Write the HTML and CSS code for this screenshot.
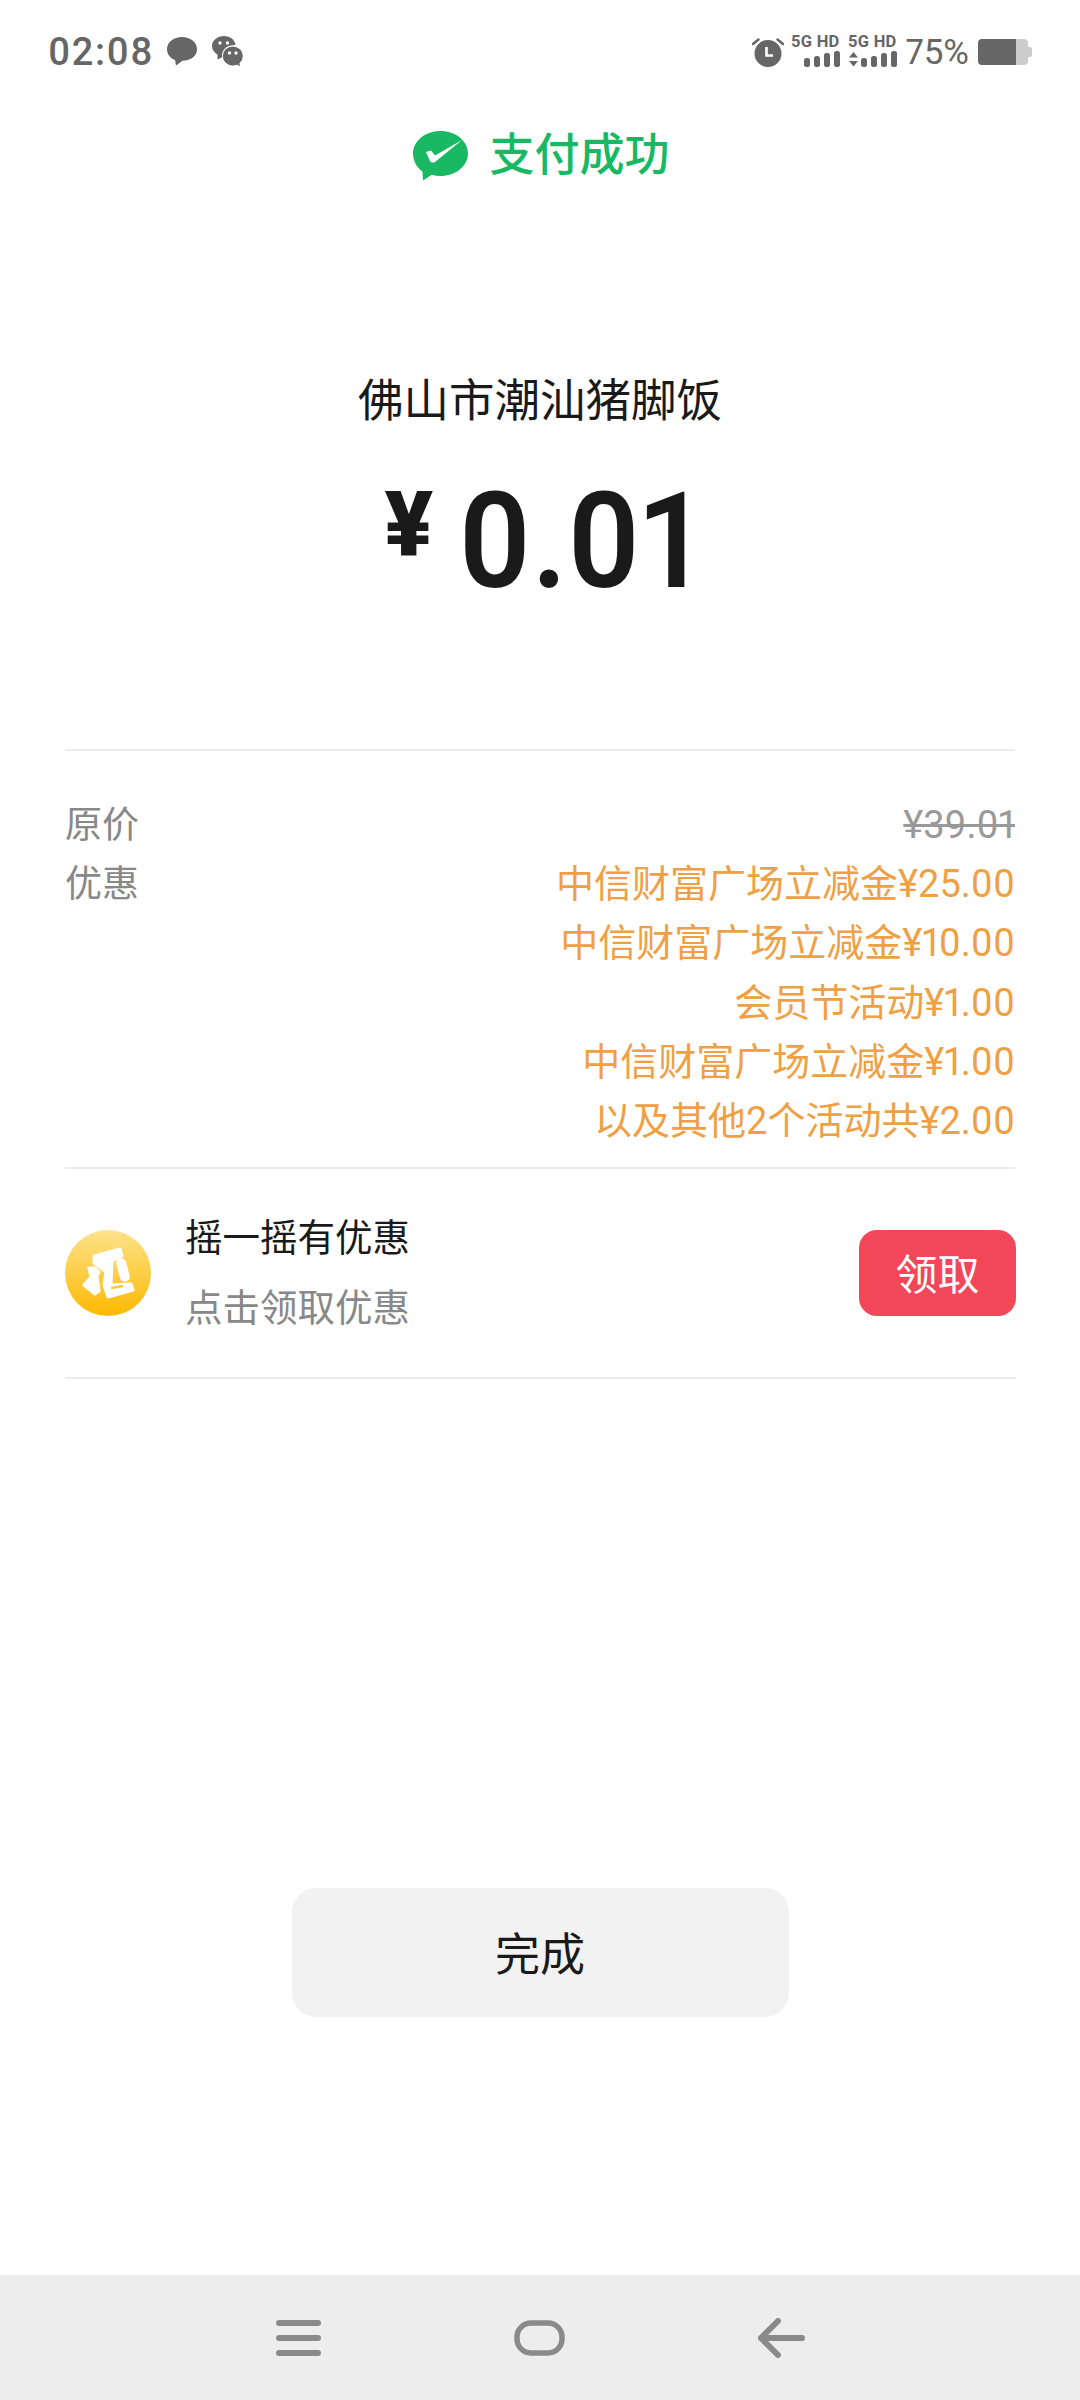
FILE: index.html
```html
<!DOCTYPE html>
<html>

<head>
    <title>支付成功</title>
    <meta name="viewport" content="width=device-width, initial-scale=1.0">
    <link rel="stylesheet" href="styles.css">
</head>

<body>
    <div class="page">
        <header class="status">
            <span class="time">02:08</span>
            <svg class="ic-msg" width="30" height="30" viewBox="0 0 30 30">
                <path d="M15 0C23.300 0 30 5.200 30 12.200C30 19 24 23.500 15.500 23.800L9 28.500L8 23C3 21 0 17 0 12.200C0 5.200 6.700 0 15 0Z" fill="#666" />
            </svg>
            <svg class="ic-wx" width="31" height="31" viewBox="0 0 31 31">
                <path d="M12 0C18 0 23 3.800 23.500 9C17 8.500 10.500 12 10 19C9.900 19.800 10 20.500 10.200 21.200L5.500 23.500L5.500 18.500C2 16.500 0 13.500 0 10C0 4.500 5.300 0 12 0Z" fill="#666" />
                <circle cx="8" cy="7" r="1.700" fill="#fff" />
                <circle cx="15.500" cy="7" r="1.700" fill="#fff" />
                <ellipse cx="20.800" cy="20" rx="10" ry="9.400" fill="#666" />
                <path d="M23 27L28 30.500L27 25Z" fill="#666" />
                <circle cx="17.500" cy="17" r="1.700" fill="#fff" />
                <circle cx="24" cy="17" r="1.700" fill="#fff" />
            </svg>
            <div class="status-right">
                <svg class="ic-alarm" width="32" height="30" viewBox="0 0 32 30">
                    <circle cx="16" cy="16.500" r="13.500" fill="#666" />
                    <path d="M1 7L6.500 2.500M31 7L25.500 2.500" stroke="#666" stroke-width="2.500" stroke-linecap="round" />
                    <path d="M14.500 10V18.500H21" stroke="#fff" stroke-width="2.600" fill="none" />
                </svg>
                <div class="net">
                    <span class="net-label">5G HD</span>
                    <svg width="48" height="16" viewBox="0 0 48 16">
                        <rect x="12" y="7" width="6" height="9" rx="2.500" fill="#666" />
                        <rect x="22" y="5" width="6" height="11" rx="2.500" fill="#666" />
                        <rect x="32" y="2" width="6" height="14" rx="2.500" fill="#666" />
                        <rect x="42" y="0" width="6" height="16" rx="2.500" fill="#666" />
                    </svg>
                </div>
                <div class="net">
                    <span class="net-label">5G HD</span>
                    <svg width="48" height="16" viewBox="0 0 48 16">
                        <path d="M0 6.500L4.500 1L9 6.500ZM0 10L4.500 15.500L9 10Z" fill="#666" />
                        <rect x="12" y="7" width="6" height="9" rx="2.500" fill="#666" />
                        <rect x="22" y="5" width="6" height="11" rx="2.500" fill="#666" />
                        <rect x="32" y="2" width="6" height="14" rx="2.500" fill="#666" />
                        <rect x="42" y="0" width="6" height="16" rx="2.500" fill="#666" />
                    </svg>
                </div>
                <span class="pct">75%</span>
                <svg class="ic-batt" width="54" height="26" viewBox="0 0 54 26">
                    <path d="M38 0H46C48.800 0 50 1.500 50 4V8H52C53.500 8 54 9 54 10V16C54 17 53.500 18 52 18H50V22C50 24.500 48.800 26 46 26H38Z" fill="#ccc" />
                    <path d="M4 0H38V26H4C1.500 26 0 24.500 0 22V4C0 1.500 1.500 0 4 0Z" fill="#666" />
                </svg>
            </div>
        </header>

        <div class="result">
            <svg width="55" height="50" viewBox="0 0 55 50">
                <path d="M27.500 0C42.700 0 55 10 55 22.500C55 35 42.700 45 27.500 45C24.500 45 21.500 44.600 18.800 43.800L10 49.500L9.500 40.500C3.700 36.500 0 29.800 0 22.500C0 10 12.300 0 27.500 0Z" fill="#19b863" />
                <path d="M13 21L18 19.500L22 24.500L49 9L22 31Q19 32.500 17 30Z" fill="#fff" />
            </svg>
            <span class="result-text">支付成功</span>
        </div>

        <section class="pay">
            <div class="shop">佛山市潮汕猪脚饭</div>
            <div class="amount"><span class="yen">¥</span><span class="num">0.01</span></div>
        </section>

        <section class="detail">
            <div class="row">
                <span class="label">原价</span>
                <span class="old">¥39.01</span>
            </div>
            <div class="row">
                <span class="label">优惠</span>
                <div class="offers">
                    <div>中信财富广场立减金¥25.00</div>
                    <div>中信财富广场立减金¥10.00</div>
                    <div>会员节活动¥1.00</div>
                    <div>中信财富广场立减金¥1.00</div>
                    <div>以及其他2个活动共¥2.00</div>
                </div>
            </div>
        </section>

        <section class="promo">
            <svg class="promo-icon" width="86" height="86" viewBox="0 0 86 86">
                <defs>
                    <linearGradient id="coin" x1="0" y1="0" x2="0" y2="1">
                        <stop offset="0" stop-color="#fde38c" />
                        <stop offset="1" stop-color="#fdb900" />
                    </linearGradient>
                </defs>
                <circle cx="43" cy="43" r="43" fill="url(#coin)" />
                <g fill="#fff" stroke="#fff" stroke-width="3" stroke-linejoin="round">
                    <path d="M29 26L55 19L57 26L47 31L46 55L66 54L68 60L43 67L39 55L41 42L29 33Z" />
                    <path d="M24 38L30 38L34 42L32 46L34 61L30 64L19 55L26 47Z" />
                </g>
                <path d="M46 58L58 56" stroke="#fdc93a" stroke-width="2.500" />
                <rect x="53" y="28" width="10" height="24" rx="5" fill="#fff" transform="rotate(-15 58 40)" />
            </svg>
            <div class="promo-text">
                <div class="promo-title">摇一摇有优惠</div>
                <div class="promo-sub">点击领取优惠</div>
            </div>
            <button class="claim">领取</button>
        </section>

        <button class="done">完成</button>

        <nav class="navbar">
            <svg width="45" height="36" viewBox="0 0 45 36">
                <path d="M3 3H42M3 18H42M3 33H42" stroke="#8a8a8a" stroke-width="6" stroke-linecap="round" />
            </svg>
            <svg width="51" height="36" viewBox="0 0 51 36">
                <rect x="3" y="3" width="45" height="30" rx="14" fill="none" stroke="#8a8a8a" stroke-width="5.500" />
            </svg>
            <svg width="47" height="40" viewBox="0 0 47 40">
                <path d="M20 3L3 20L20 37M3 20H44" fill="none" stroke="#8a8a8a" stroke-width="6" stroke-linecap="round" stroke-linejoin="round" />
            </svg>
        </nav>
    </div>
</body>

</html>
```

FILE: styles.css
```css
* { box-sizing: border-box; }
body { margin: 0; background: #fff; font-family: Roboto, "Noto Sans CJK SC", sans-serif; font-variant-numeric: proportional-nums; }
.page { display: flex; flex-direction: column; width: 1080px; height: 2400px; }

.status { display: flex; align-items: center; height: 100px; padding: 3px 48px 0 48px; color: #666; }
.time { font-size: 38px; font-weight: 500; letter-spacing: 1.500px; margin-right: 13px; }
.ic-wx { margin-left: 15px; }
.status-right { display: flex; align-items: center; margin-left: auto; }
.ic-alarm { margin-right: 8px; }
.net { display: flex; flex-direction: column; align-items: flex-end; width: 48px; margin-right: 9px; margin-top: -3px; }
.net-label { font-size: 16.500px; font-weight: 700; letter-spacing: .3px; line-height: 16px; white-space: nowrap; margin-bottom: 1px; }
.pct { font-size: 35px; line-height: 40px; margin-top: 3px; margin-right: 9px; }

.result { display: flex; align-items: center; justify-content: center; gap: 21px; height: 50px; margin-top: 31px; padding-left: 3px; }
.result-text { font-size: 45px; font-weight: 500; line-height: 50px; color: #19b863; }

.pay { display: flex; flex-direction: column; align-items: center; height: 570px; margin: 0 65px; border-bottom: 2px solid #ececec; }
.shop { font-size: 45.500px; line-height: 70px; color: #1a1a1a; margin-top: 186px; }
.amount { display: flex; align-items: flex-start; color: #1a1a1a; margin-top: 30px; }
.yen { font-size: 90px; font-weight: 900; line-height: 100px; margin-top: 9px; margin-right: 25px; }
.num { font-size: 134px; font-weight: 600; line-height: 150px; transform: scaleX(.93); transform-origin: left; margin-right: -22px; }

.detail { margin: 0 65px; padding: 45px 0 0; height: 418px; border-bottom: 2px solid #ececec; }
.row { display: flex; justify-content: space-between; font-size: 38px; line-height: 59.200px; }
.label { color: #888; font-size: 37px; }
.old { color: #999; text-decoration: line-through; }
.offers { text-align: right; color: #f0a044; }

.promo { display: flex; align-items: center; margin: 0 64px 0 65px; height: 210px; border-bottom: 2px solid #ececec; }
.promo-icon { flex-shrink: 0; }
.promo-text { margin-left: 34px; font-size: 37.500px; line-height: 50px; }
.promo-title { color: #1a1a1a; margin-bottom: 20px; }
.promo-sub { color: #888; }
.claim { width: 157px; height: 86px; margin-left: auto; padding: 0 0 3px; border: 0; border-radius: 18px; background: #f24759; color: #fff; font-family: inherit; font-size: 42px; }

.done { width: 497px; height: 129px; margin: 509px auto 0; padding: 0 0 3px; border: 0; border-radius: 24px; background: #f2f2f2; color: #1a1a1a; font-family: inherit; font-size: 45px; }

.navbar { display: flex; align-items: center; justify-content: center; gap: 193px; height: 125px; margin-top: auto; background: #ededed; }
```
